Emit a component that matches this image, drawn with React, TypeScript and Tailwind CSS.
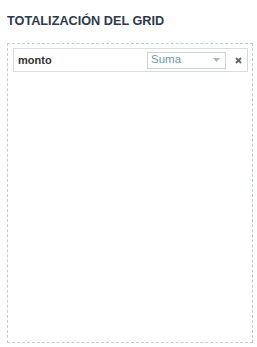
import React from "react";

export default function App() {
  return (
    <div className="w-[257px] h-[347px] bg-white" style={{ fontFamily: "'Liberation Sans', Arial, sans-serif" }}>
      <div className="pt-[14px] pl-[7px] text-[12.7px] leading-[15px] font-bold text-[#2f3a4a]">TOTALIZACIÓN DEL GRID</div>
      <div className="mt-[14px] ml-[7px] w-[246px] h-[300px] border border-dashed border-[#c2cce0] pt-[4px] pl-[5px] pr-[4px]">
        <div className="h-[24px] border border-[#dcdcdc] flex items-center pl-[4px] pr-[5px]">
          <span className="text-[11px] font-bold text-[#333]">monto</span>
          <div className="ml-auto w-[79px] h-[17px] border border-[#c9d3df] flex items-center pl-[3px] pr-[5px]">
            <span className="text-[11.5px] text-[#7196b0] leading-none">Suma</span>
            <svg className="ml-auto" width="7" height="4" viewBox="0 0 7 4"><path d="M0 0H7L3.5 4Z" fill="#b5b5b5" /></svg>
          </div>
          <svg className="ml-[9px]" width="7" height="7" viewBox="0 0 7 7">
            <path d="M1 1L6 6M6 1L1 6" stroke="#666" strokeWidth="1.8" />
          </svg>
        </div>
      </div>
    </div>
  );
}
